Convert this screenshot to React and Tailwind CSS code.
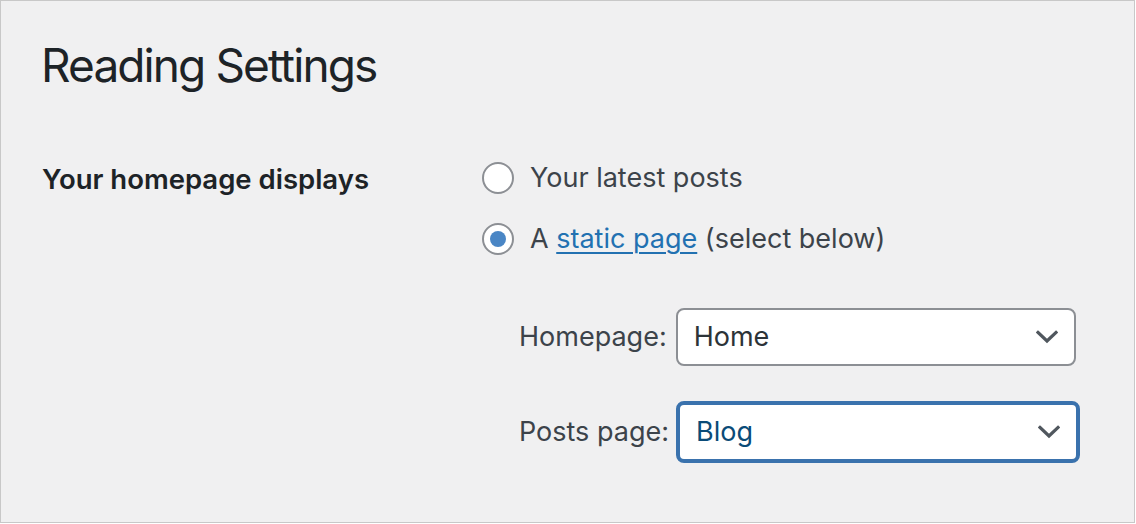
import React from "react";

function Chevron() {
  return (
    <svg width="22" height="14" viewBox="0 0 22 14" fill="none">
      <path d="M2 2.5 L11 11 L20 2.5" stroke="#50575e" strokeWidth="3.2" strokeLinecap="square" />
    </svg>
  );
}

export default function App() {
  return (
    <div
      className="w-[1135px] h-[523px] bg-[#f0f0f1] border border-[#c8c8c8] flex flex-col"
      style={{ fontFamily: "Inter, 'Noto Sans', sans-serif" }}
    >
      <h1 className="ml-[40px] mt-[36px] text-[46px] leading-[56px] font-normal text-[#1d2327] tracking-[-1.9px]">
        Reading Settings
      </h1>
      <div className="flex mt-[61px]">
        <div className="w-[481px] shrink-0 pl-[41px] pt-[8px] text-[27.5px] leading-[34px] font-semibold text-[#1d2327]">
          Your homepage displays
        </div>
        <div className="flex flex-col">
          <label className="flex items-center h-[34px] mt-[7px] text-[27px] text-[#3c434a]">
            <span className="w-[32px] h-[32px] rounded-full border-2 border-[#8c8f94] bg-white" />
            <span className="ml-[16px]">Your latest posts</span>
          </label>
          <label className="flex items-center h-[34px] mt-[27px] text-[27px] text-[#3c434a]">
            <span className="w-[32px] h-[32px] rounded-full border-2 border-[#8c8f94] bg-white flex items-center justify-center">
              <span className="w-[16px] h-[16px] rounded-full bg-[#4a86c5]" />
            </span>
            <span className="ml-[16px]">
              A{" "}
              <a className="text-[#2271b1] underline underline-offset-[4px] decoration-[2px]">static page</a>{" "}
              (select below)
            </span>
          </label>
          <div className="flex items-center ml-[37px] mt-[52px] text-[27px] text-[#3c434a]">
            <span>Homepage:</span>
            <div className="ml-[9px] w-[400px] h-[58px] rounded-[8px] border-2 border-[#8c8f94] bg-white flex items-center justify-between pl-[16px] pr-[16px] text-[#2c3338]">
              <span>Home</span>
              <Chevron />
            </div>
          </div>
          <div className="flex items-center ml-[37px] mt-[35px] text-[27px] text-[#3c434a]">
            <span>Posts page:</span>
            <div className="ml-[7px] w-[404px] h-[62px] rounded-[8px] border-4 border-[#3a72ad] bg-white flex items-center justify-between pl-[16px] pr-[16px] text-[#0a4b78]">
              <span>Blog</span>
              <Chevron />
            </div>
          </div>
        </div>
      </div>
    </div>
  );
}
